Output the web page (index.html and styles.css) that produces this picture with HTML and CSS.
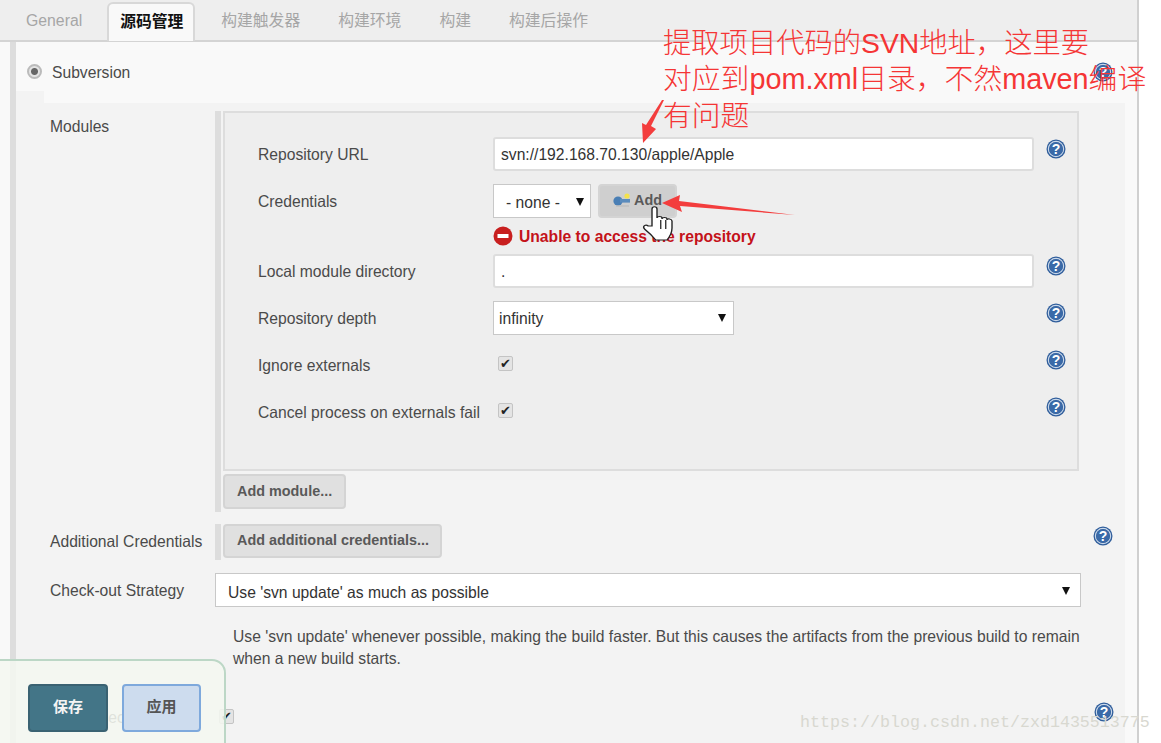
FILE: index.html
```html
<!DOCTYPE html>
<html lang="zh">
<head>
    <meta charset="UTF-8">
    <meta name="viewport" content="width=device-width, initial-scale=1.0">
    <title>Jenkins 源码管理</title>
    <link rel="stylesheet" href="styles.css">
</head>
<body>
    <svg class="defs" width="0" height="0">
        <symbol id="help" viewBox="0 0 20 20">
            <circle cx="10" cy="10" r="9.5" fill="#2f5d9b"/>
            <circle cx="10" cy="10" r="7.6" fill="none" stroke="#c9d8ea" stroke-width="1.2"/>
            <circle cx="10" cy="10" r="6.8" fill="#3a6aa8"/>
            <text x="10" y="15" text-anchor="middle" font-family="Liberation Sans" font-weight="bold" font-size="14" fill="#fff">?</text>
        </symbol>
    </svg>

    <div class="page">
        <div class="tabs">
            <div class="tab tab-first">General</div>
            <div class="tab active">源码管理</div>
            <div class="tab">构建触发器</div>
            <div class="tab">构建环境</div>
            <div class="tab">构建</div>
            <div class="tab">构建后操作</div>
        </div>

        <div class="config">
            <div class="scm-head">
                <span class="radio"></span>
                <span class="scm-name">Subversion</span>
                <svg class="help help-head"><use href="#help"/></svg>
            </div>

            <div class="scm-body">
                <div class="section modules">
                    <div class="side-label">Modules</div>
                    <div class="stripe">
                        <div class="module-box">
                            <div class="row">
                                <label>Repository URL</label>
                                <div class="input">svn://192.168.70.130/apple/Apple</div>
                                <svg class="help"><use href="#help"/></svg>
                            </div>
                            <div class="row">
                                <label>Credentials</label>
                                <div class="select select-none">- none -</div>
                                <div class="btn btn-add">
                                    <svg class="key" width="18" height="14" viewBox="0 0 18 14">
                                        <circle cx="14" cy="3" r="2.6" fill="#f4e24c"/>
                                        <circle cx="5" cy="8" r="4.6" fill="#4a7fb5"/>
                                        <rect x="7" y="6" width="10" height="3.6" fill="#5b8cbd"/>
                                        <rect x="3" y="12.5" width="13" height="1" fill="#b8b8b8"/>
                                    </svg>
                                    Add
                                </div>
                            </div>
                            <div class="error-row">
                                <svg class="stop" width="20" height="20" viewBox="0 0 20 20">
                                    <circle cx="10" cy="10" r="9.5" fill="#c81f1f"/>
                                    <rect x="4.5" y="8" width="11" height="4" fill="#fff"/>
                                </svg>
                                <span class="error-text">Unable to access the repository</span>
                            </div>
                            <div class="row">
                                <label>Local module directory</label>
                                <div class="input">.</div>
                                <svg class="help"><use href="#help"/></svg>
                            </div>
                            <div class="row">
                                <label>Repository depth</label>
                                <div class="select select-depth">infinity</div>
                                <svg class="help help-depth"><use href="#help"/></svg>
                            </div>
                            <div class="row">
                                <label>Ignore externals</label>
                                <div class="check-cell"><span class="check">✔</span></div>
                                <svg class="help"><use href="#help"/></svg>
                            </div>
                            <div class="row">
                                <label>Cancel process on externals fail</label>
                                <div class="check-cell"><span class="check">✔</span></div>
                                <svg class="help"><use href="#help"/></svg>
                            </div>
                        </div>
                        <div class="btn btn-module">Add module...</div>
                    </div>
                </div>

                <div class="section credentials">
                    <div class="side-label">Additional Credentials</div>
                    <div class="stripe stripe-short">
                        <div class="btn btn-credentials">Add additional credentials...</div>
                    </div>
                    <svg class="help help-wide"><use href="#help"/></svg>
                </div>

                <div class="section strategy">
                    <div class="side-label">Check-out Strategy</div>
                    <div class="select select-wide">Use 'svn update' as much as possible</div>
                </div>

                <p class="description">Use 'svn update' whenever possible, making the build faster. But this causes the artifacts from the previous build to remain when a new build starts.</p>

                <div class="section last-row">
                    <div class="side-label">Quiet check-out</div>
                    <span class="check check-last">✔</span>
                    <svg class="help help-last"><use href="#help"/></svg>
                </div>
            </div>
        </div>
    </div>

    <div class="bottom-bar">
        <div class="btn-save">保存</div>
        <div class="btn-apply">应用</div>
    </div>

    <!-- 截图上的红色标注 -->
    <div class="note note-1">提取项目代码的SVN地址，这里要</div>
    <div class="note note-2">对应到pom.xml目录，不然maven编译</div>
    <div class="note note-3">有问题</div>
    <svg class="marks" width="1161" height="743" viewBox="0 0 1161 743">
        <polygon points="664,100 651,126 656,129 643,143 642,123 646,125 662,100" fill="#f33d3d"/>
        <polygon points="795,215 680,206 682,212 662,203 680,195 679,201" fill="#f33d3d"/>
        <g transform="translate(652 207) scale(1.25 1) translate(-652 -207)">
            <path d="M652 226V209c0-3 4-3 4 0v9c0-2 4-2 4 0v1c0-2 4-2 4 0v1c0-2 4-1 4 1v7c0 6-2 9-4 12h-9c-2-3-5-7-9-11-2-3 1-5 3-3z" fill="#fff" stroke="#222" stroke-width="1.1"/>
            <path d="M659 220v9M663 220v9" stroke="#222" stroke-width="1"/>
        </g>
    </svg>
    <div class="watermark">https://blog.csdn.net/zxd1435513775</div>
</body>
</html>
```

FILE: styles.css
```css
* {
    box-sizing: border-box;
}
html, body {
    height: 743px;
    overflow: hidden;
}
body {
    margin: 0;
    background: #fff;
    color: #4a4a4a;
    font-family: "Liberation Sans", Arial, "Noto Sans CJK SC", sans-serif;
    font-size: 15.67px;
    position: relative;
}
.defs {
    position: absolute;
}
.page {
    width: 1139px;
    height: 743px;
    border-right: 2px solid #d0d0d0;
    background: #f9f9f9;
}
.tabs {
    display: flex;
    height: 42px;
    background: #eee;
    border-bottom: 2px solid #d4d4d4;
    padding: 2px 0 0 13px;
    color: #a6a6a6;
    font-size: 15.8px;
}
.tab {
    padding: 8px 13px 0;
    height: 38px;
    line-height: 22px;
    margin-right: 12px;
    white-space: nowrap;
}
.tab-first {
    margin-right: 12px;
}
.tab.active {
    height: 39px;
    width: 88px;
    padding: 7px 11px 0;
    margin-right: 13px;
    background: #f9f9f9;
    border: 2px solid #d8d8d8;
    border-bottom: 0;
    border-radius: 6px 6px 0 0;
    color: #111;
    font-weight: bold;
}
.config {
    margin-left: 10px;
    border-left: 6px solid #ddd;
    height: 701px;
}
.scm-head {
    position: relative;
    height: 61px;
    display: flex;
    align-items: flex-start;
    padding: 21px 0 0 11px;
}
.scm-head::after {
    content: "";
    position: absolute;
    left: 0;
    bottom: 0;
    width: 28px;
    height: 12px;
    background: #f3f3f3;
}
.radio {
    width: 15px;
    height: 15px;
    margin-top: 1px;
    border-radius: 50%;
    border: 2px solid #bbb;
    background: radial-gradient(circle, #666 0 3px, #e4e4e4 4px);
}
.scm-name {
    margin-left: 10px;
    line-height: 20px;
}
.help {
    width: 20px;
    height: 20px;
    flex: none;
}
.help-head {
    margin: -1px 24px 0 auto;
}
.scm-body {
    background: #f3f3f3;
    width: 1109px;
    height: 640px;
    padding-top: 8px;
}
.section {
    display: flex;
}
.side-label {
    width: 199px;
    padding-left: 34px;
    flex: none;
    white-space: nowrap;
}
.modules .side-label {
    padding-top: 7px;
}
.stripe {
    border-left: 6px solid #ddd;
    padding-left: 2px;
    width: 866px;
    height: 401px;
}
.module-box {
    width: 856px;
    height: 360px;
    border: 2px solid #ddd;
    background: #eee;
    padding: 24px 0 0 33px;
}
.row {
    display: flex;
    height: 34px;
    margin-bottom: 13px;
    align-items: center;
}
.row label {
    width: 235px;
    flex: none;
    white-space: nowrap;
    padding-top: 2px;
}
.row .help {
    align-self: flex-start;
    margin: 2px 0 0 12px;
}
.input {
    width: 541px;
    height: 34px;
    padding: 0 6px;
    line-height: 31px;
    background: #fff;
    border: 2px solid #ddd;
    border-radius: 3px;
    color: #333;
}
.select {
    height: 34px;
    display: flex;
    align-items: center;
    justify-content: space-between;
    background: #fff;
    border: 1px solid #c8c8c8;
    color: #333;
}
.select::after {
    content: "";
    border-top: 8px solid #111;
    border-left: 4.5px solid transparent;
    border-right: 4.5px solid transparent;
    margin-top: -3px;
}
.select-none {
    width: 98px;
    padding: 4px 6px 0 12px;
}
.select-depth {
    width: 241px;
    padding: 2px 7px 0 5px;
}
.help-depth {
    margin-left: 312px !important;
}
.select-wide {
    width: 866px;
    padding: 5px 10px 0 12px;
}
.btn {
    display: inline-flex;
    align-items: center;
    background: #e0e0e0;
    border: 2px solid #d4d4d4;
    border-radius: 4px;
    color: #595959;
    font-size: 14.4px;
    font-weight: bold;
}
.btn-add {
    width: 79px;
    height: 34px;
    margin-left: 7px;
    padding: 0 0 2px 13px;
    background: #cfcfcf;
    gap: 3px;
}
.key {
    flex: none;
}
.error-row {
    display: flex;
    align-items: center;
    height: 20px;
    margin: -5px 0 8px 235px;
    gap: 6px;
    color: #c4121a;
    font-weight: bold;
    white-space: nowrap;
}
.error-text {
    padding-top: 2px;
}
.check-cell {
    width: 541px;
    padding-left: 5px;
}
.check {
    display: inline-block;
    width: 15px;
    height: 15px;
    line-height: 13px;
    font-size: 13px;
    text-align: center;
    color: #222;
    background: #e4e4e4;
    border: 1px solid #c4c4c4;
    border-radius: 2px;
    position: relative;
    top: -2px;
}
.btn-module {
    height: 35px;
    width: 123px;
    margin-top: 3px;
    padding: 0 0 2px 12px;
}
.credentials {
    margin-top: 12px;
    height: 36px;
}
.credentials .side-label {
    padding-top: 9px;
}
.stripe-short {
    width: 866px;
    height: 36px;
}
.btn-credentials {
    width: 219px;
    height: 34px;
    padding: 0 0 2px 12px;
}
.help-wide {
    margin: 2px 0 0 12px;
}
.strategy {
    margin-top: 13px;
    height: 34px;
    align-items: center;
}
.strategy .side-label {
    padding-top: 2px;
}
.description {
    margin: 19px 0 0 217px;
    width: 860px;
    line-height: 22px;
}
.last-row {
    margin-top: 35px;
    height: 30px;
}
.last-row .side-label {
    padding-top: 4px;
}
.check-last {
    margin-left: 4px;
    margin-top: 6px;
}
.help-last {
    margin-left: 860px;
    margin-top: 0;
    position: relative;
    top: -3px;
}
.bottom-bar {
    position: absolute;
    left: -2px;
    top: 659px;
    width: 228px;
    height: 90px;
    display: flex;
    gap: 14px;
    padding: 23px 0 0 28px;
    background: rgba(244, 247, 240, 0.88);
    border: 2px solid #bcd7c6;
    border-radius: 0 14px 0 0;
}
.btn-save, .btn-apply {
    height: 48px;
    line-height: 41px;
    text-align: center;
    font-size: 15px;
    font-weight: bold;
    border-radius: 4px;
}
.btn-save {
    width: 80px;
    background: #437587;
    border: 2px solid #3a6272;
    color: #f4f4f4;
}
.btn-apply {
    width: 79px;
    background: #cddcee;
    border: 2px solid #7ea9dc;
    color: #555;
}
.note {
    position: absolute;
    left: 663px;
    font-size: 28.8px;
    line-height: 36px;
    color: #f53535;
    white-space: nowrap;
    font-weight: 300;
    font-family: "Liberation Sans", "Noto Sans CJK SC", sans-serif;
}
.note-1 {
    top: 25px;
    font-size: 28.3px;
}
.note-2 {
    top: 61px;
}
.note-3 {
    top: 98px;
}
.marks {
    position: absolute;
    left: 0;
    top: 0;
    pointer-events: none;
}
.watermark {
    position: absolute;
    left: 800px;
    top: 713px;
    font-family: "Liberation Mono", monospace;
    font-size: 16.67px;
    color: #d8d8d0;
    white-space: nowrap;
}
```
